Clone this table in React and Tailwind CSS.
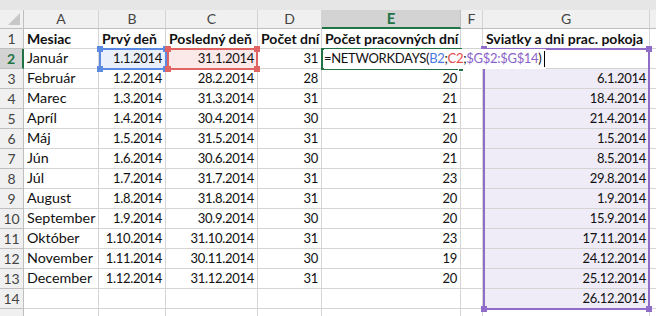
const cols = [
  { key: "A", w: 75 },
  { key: "B", w: 67 },
  { key: "C", w: 92 },
  { key: "D", w: 64 },
  { key: "E", w: 139 },
  { key: "F", w: 22 },
  { key: "G", w: 167 },
];

const rows = [
  ["Mesiac", "Prvý deň", "Posledný deň", "Počet dní", "Počet pracovných dní", "", "Sviatky a dni prac. pokoja"],
  ["Január", "1.1.2014", "31.1.2014", "31", "", "", ""],
  ["Február", "1.2.2014", "28.2.2014", "28", "20", "", "6.1.2014"],
  ["Marec", "1.3.2014", "31.3.2014", "31", "21", "", "18.4.2014"],
  ["Apríl", "1.4.2014", "30.4.2014", "30", "21", "", "21.4.2014"],
  ["Máj", "1.5.2014", "31.5.2014", "31", "20", "", "1.5.2014"],
  ["Jún", "1.6.2014", "30.6.2014", "30", "21", "", "8.5.2014"],
  ["Júl", "1.7.2014", "31.7.2014", "31", "23", "", "29.8.2014"],
  ["August", "1.8.2014", "31.8.2014", "31", "20", "", "1.9.2014"],
  ["September", "1.9.2014", "30.9.2014", "30", "20", "", "15.9.2014"],
  ["Október", "1.10.2014", "31.10.2014", "31", "23", "", "17.11.2014"],
  ["November", "1.11.2014", "30.11.2014", "30", "19", "", "24.12.2014"],
  ["December", "1.12.2014", "31.12.2014", "31", "20", "", "25.12.2014"],
  ["", "", "", "", "", "", "26.12.2014"],
];

// corner squares on a range outline
const Handle = ({ className }) => (
  <span className={`absolute h-[6px] w-[6px] ${className}`} />
);

const RangeBox = ({ className, color }) => (
  <div className={`pointer-events-none absolute border-2 ${className}`}>
    <Handle className={`-top-[4px] -left-[4px] ${color}`} />
    <Handle className={`-top-[4px] -right-[4px] ${color}`} />
    <Handle className={`-bottom-[4px] -left-[4px] ${color}`} />
    <Handle className={`-bottom-[4px] -right-[4px] ${color}`} />
  </div>
);

const cellBg = (r, c) => {
  if (r === 1 && c === 1) return "bg-[#e9effb]";
  if (r === 1 && c === 2) return "bg-[#fbe8e8]";
  if (r >= 2 && c === 6) return "bg-[#efebf7]";
  return "bg-white";
};

const Formula = () => (
  <span className="relative z-30 flex items-center bg-white py-[2px] pr-[1px]">
    <span>=NETWORKDAYS(</span>
    <span className="text-[#4a7bdc]">B2</span>
    <span>;</span>
    <span className="text-[#e04b4b]">C2</span>
    <span>;</span>
    <span className="text-[#8a63c8]">$G$2:$G$14</span>
    <span>)</span>
    <span className="ml-[2px] h-[16px] w-px bg-black" />
  </span>
);

export default function App() {
  return (
    <div className="relative h-[316px] w-[656px] overflow-hidden bg-white font-['Lato',sans-serif] text-[13px] tracking-[-0.3px] text-[#111]">
      <div className="h-[10px] bg-[#e6e6e6]" />
      <div className="grid grid-cols-[24px_75px_67px_92px_64px_139px_22px_167px_1fr] grid-rows-[19px_repeat(15,20px)]">
        {/* corner */}
        <div className="relative border-r border-b border-[#bfbfbf] bg-[#f0f0f0]">
          <div className="absolute right-[3px] bottom-[3px] h-0 w-0 border-t-[12px] border-l-[12px] border-t-transparent border-l-transparent [border-bottom:12px_solid_#c8c8c8]" />
        </div>
        {cols.map((c) =>
          c.key === "E" ? (
            <div
              key={c.key}
              className="flex items-center justify-center border-r border-b-2 border-r-[#bfbfbf] border-b-[#217346] bg-[#d3d3d3] text-[15px] font-bold leading-none tracking-normal text-[#217346]"
            >
              {c.key}
            </div>
          ) : (
            <div
              key={c.key}
              className="flex items-center justify-center border-r border-b border-[#d4d4d4] border-b-[#bfbfbf] bg-[#f0f0f0] text-[14px] leading-none tracking-normal text-[#444]"
            >
              {c.key}
            </div>
          )
        )}
        <div className="border-b border-[#bfbfbf] bg-[#f0f0f0]" />

        {[...rows, null].map((row, r) => (
          <Row key={r} row={row} r={r} />
        ))}
      </div>

      <RangeBox className="top-[48px] left-[99px] h-[22px] w-[68px] border-[#5b8ae0]" color="bg-[#5b8ae0]" />
      <RangeBox className="top-[48px] left-[167px] h-[22px] w-[91px] border-[#e06464]" color="bg-[#e06464]" />
      <RangeBox className="top-[48px] left-[483px] h-[262px] w-[167px] border-[#8f6cc8]" color="bg-[#8f6cc8]" />
      {/* active cell E2 */}
      <div className="pointer-events-none absolute top-[48px] left-[321px] z-20 h-[22px] w-[141px] border-2 border-[#217346]">
        <Handle className="-right-[4px] -bottom-[4px] border border-white bg-[#217346]" />
      </div>
    </div>
  );
}

function Row({ row, r }) {
  const num = r + 1;
  const active = num === 2;
  return (
    <>
      <div
        className={
          active
            ? "flex items-center justify-center border-r-2 border-b border-r-[#217346] border-b-[#bfbfbf] bg-[#d3d3d3] text-[14px] font-bold leading-none tracking-normal text-[#217346]"
            : "flex items-center justify-center border-r border-b border-[#bfbfbf] bg-[#f0f0f0] text-[14px] leading-none tracking-normal text-[#444]"
        }
      >
        {row ? num : ""}
      </div>
      {cols.map((c, ci) => {
        const v = row ? row[ci] : "";
        const isText = r === 0 || ci === 0;
        const bg = row ? cellBg(r, ci) : "bg-white";
        if (active && c.key === "E") {
          return (
            <div
              key={c.key}
              className="flex items-center overflow-visible whitespace-nowrap border-r border-b border-[#d4d4d4] bg-white pl-[2px] leading-none"
            >
              <Formula />
            </div>
          );
        }
        const size = r === 0 ? "font-bold text-[14px] tracking-normal" : isText ? "text-[14.3px] tracking-normal" : "";
        return (
          <div
            key={c.key}
            className={`flex items-center overflow-hidden whitespace-nowrap border-r border-b border-[#d4d4d4] px-[3px] leading-none ${bg} ${
              isText ? "justify-start" : "justify-end"
            } ${size}`}
          >
            {v}
          </div>
        );
      })}
      <div className="border-b border-[#d4d4d4] bg-white" />
    </>
  );
}
